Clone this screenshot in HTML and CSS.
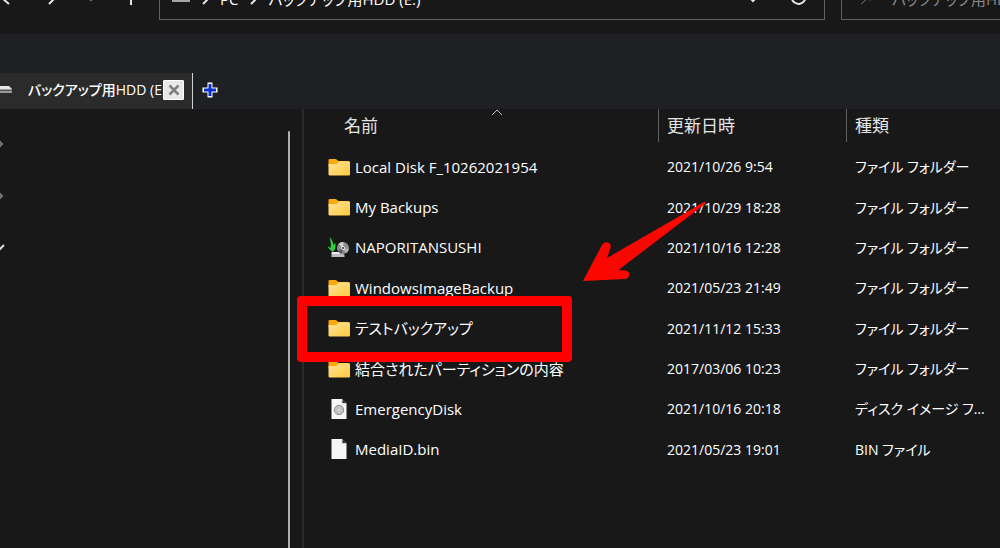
FILE: index.html
```
<!DOCTYPE html>
<html lang="ja">
<head>
  <meta charset="UTF-8">
  <meta name="viewport" content="width=device-width, initial-scale=1.0">
  <title>バックアップ用HDD (E:)</title>
  <link rel="stylesheet" href="styles.css">
</head>
<body>
  <!-- Shared icons -->
  <svg class="sprite" width="0" height="0" aria-hidden="true">
    <defs>
      <linearGradient id="folder-fill" x1="0" y1="0" x2="1" y2="1">
        <stop offset="0" stop-color="#ffe49a"/>
        <stop offset="1" stop-color="#ffc83d"/>
      </linearGradient>
      <linearGradient id="arrow-fill" x1="0" y1="1" x2="1" y2="0">
        <stop offset="0" stop-color="#ff0800"/>
        <stop offset="0.3" stop-color="#f50800"/>
        <stop offset="1" stop-color="#ff0800"/>
      </linearGradient>
    </defs>
    <symbol id="folder" viewBox="0 0 22 20">
      <path d="M1 3.5C1 2.4 1.6 2 2.5 2h5.2c.8 0 1.2.2 1.7.8L11 4h9c1 0 1.500.500 1.500 1.500V9H1z" fill="#f9a80c"/>
      <path d="M1 8c0-.8.4-1.100 1.100-1.100h6c.8 0 1.300-.3 1.800-.9l1-1.200c.3-.4.600-.5 1.100-.5h9c1 0 1.500.5 1.500 1.400V17c0 1-.5 1.600-1.500 1.600h-17.500C1.500 18.600 1 18 1 17z" fill="url(#folder-fill)"/>
    </symbol>
    <symbol id="page" viewBox="0 0 22 20">
      <path d="M4 0h10.500L19 4.500V20H4z" fill="#f7f7f7"/>
      <path d="M14.500 0v4.500H19z" fill="#2a2a2a"/>
      <path d="M14.500 .5v4H18.500" fill="none" stroke="#d8d8d8"/>
    </symbol>
  </svg>

  <header class="toolbar">
    <nav class="nav-buttons">
      <button aria-label="戻る"><svg width="16" height="16" viewBox="0 0 16 16"><path d="M9 0 2 6l7 6"/></svg></button>
      <button aria-label="進む"><svg width="16" height="16" viewBox="0 0 16 16"><path d="m6 0 6 6-6 6"/></svg></button>
      <button class="dim" aria-label="履歴"><svg width="10" height="16" viewBox="0 0 10 16"><path d="m2 5 3 3 3-3"/></svg></button>
      <button aria-label="上へ"><svg width="16" height="16" viewBox="0 0 16 16"><path d="M8 13V1M3 6l5-5 5 5"/></svg></button>
    </nav>
    <div class="address">
      <svg class="drive" width="18" height="10" viewBox="0 0 18 10"><path d="M3 2h12l3 4H0z" fill="#d5d5d5"/><path d="M0 5h18v3H0z" fill="#a5a5a5"/></svg>
      <svg width="8" height="12" viewBox="0 0 8 12"><path d="m2 1 5 5-5 5"/></svg>
      <a class="crumb" href="#">PC</a>
      <svg width="8" height="12" viewBox="0 0 8 12"><path d="m2 1 5 5-5 5"/></svg>
      <a class="crumb" href="#">バックアップ用HDD (E:)</a>
      <button class="history" aria-label="以前の場所"><svg width="12" height="10" viewBox="0 0 12 10"><path d="m1 2 5 5 5-5"/></svg></button>
      <button aria-label="最新の情報に更新"><svg width="18" height="18" viewBox="0 0 18 18"><path d="M15 4a7 7 0 1 1-5-4M15 0v4h-5"/></svg></button>
    </div>
    <label class="search">
      <svg width="16" height="16" viewBox="0 0 16 16"><circle cx="10" cy="5" r="4"/><path d="m7 8-6 5"/></svg>
      <input type="search" placeholder="バックアップ用HDD (E:)の検索" aria-label="検索">
    </label>
  </header>

  <div class="tab-strip">
    <div class="tab">
      <svg class="tab-drive" width="12" height="8" viewBox="0 0 12 8"><path d="M0 0h9l3 3H0z" fill="#e8e8e8"/><path d="M0 3h12v4H0z" fill="#999"/><path d="M0 4.500h12" stroke="#555"/></svg>
      <span class="tab-title">バックアップ用HDD (E:)</span>
      <button class="tab-close" aria-label="タブを閉じる"><svg width="12" height="12" viewBox="0 0 12 12"><path d="m1.500 1.500 9 9m0-9-9 9" stroke="#808080" stroke-width="2.500"/></svg></button>
    </div>
    <button class="tab-add" aria-label="新しいタブ"><svg width="16" height="16" viewBox="0 0 16 16"><path d="M5.500 .5h5v5h5v5h-5v5h-5v-5h-5v-5h5z" fill="#fff"/><path d="M8 2v12M2 8h12" stroke="#0a2fd0" stroke-width="3"/></svg></button>
  </div>

  <main class="explorer">
    <aside class="sidebar">
      <div class="tree">
        <button aria-label="展開"><svg width="6" height="12" viewBox="0 0 6 12"><path d="m-2 2 4 4-4 4" stroke="#777" stroke-width="2"/></svg></button>
        <button aria-label="展開"><svg width="6" height="12" viewBox="0 0 6 12"><path d="m-2 2 4 4-4 4" stroke="#777" stroke-width="2"/></svg></button>
        <button aria-label="折りたたむ"><svg width="6" height="12" viewBox="0 0 6 12"><path d="m-5 4 4 4 5-5" stroke="#ddd" stroke-width="2"/></svg></button>
      </div>
      <div class="scrollbar"></div>
    </aside>

    <section class="files">
      <table>
        <colgroup><col class="col-name"><col class="col-date"><col></colgroup>
        <thead>
          <tr>
            <th><button>名前</button><svg class="sort" width="12" height="7" viewBox="0 0 12 7"><path d="m1 6 5-5 5 5"/></svg></th>
            <th><button>更新日時</button></th>
            <th><button>種類</button></th>
          </tr>
        </thead>
        <tbody>
          <tr>
            <td><a href="#"><svg class="icon"><use href="#folder"/></svg>Local Disk F_10262021954</a></td>
            <td>2021/10/26 9:54</td>
            <td>ファイル フォルダー</td>
          </tr>
          <tr>
            <td><a href="#"><svg class="icon"><use href="#folder"/></svg>My Backups</a></td>
            <td>2021/10/29 18:28</td>
            <td>ファイル フォルダー</td>
          </tr>
          <tr>
            <td><a href="#"><svg class="icon" viewBox="0 0 22 20">
              <path d="M4 15h10l3 3v2H4z" fill="#bbb"/><path d="M5 15h8l2 2H4z" fill="#eee"/>
              <circle cx="15.500" cy="11" r="6" fill="#8d8d92"/><path d="M15.500 11 11 7a6 6 0 0 1 5-2z" fill="#d5cdd0"/><path d="m15.500 11 3 5.200a6 6 0 0 0 3-4.200z" fill="#bbaeb0"/><path d="m15.500 11-5 3a6 6 0 0 0 4 3z" fill="#55596b"/>
              <circle cx="15.500" cy="11" r="2" fill="#f1e5e0"/><circle cx="15.500" cy="11" r="1" fill="#333"/>
              <path d="M2 0c3 3 4 6 3.500 8L8 6c0 4 0 6-2.500 9C4 14 1 12 0 9l3 2C4 7 3 4 2 0z" fill="#2fd03c"/>
            </svg>NAPORITANSUSHI</a></td>
            <td>2021/10/16 12:28</td>
            <td>ファイル フォルダー</td>
          </tr>
          <tr>
            <td><a href="#"><svg class="icon"><use href="#folder"/></svg>WindowsImageBackup</a></td>
            <td>2021/05/23 21:49</td>
            <td>ファイル フォルダー</td>
          </tr>
          <tr>
            <td><a href="#"><svg class="icon"><use href="#folder"/></svg>テストバックアップ</a></td>
            <td>2021/11/12 15:33</td>
            <td>ファイル フォルダー</td>
          </tr>
          <tr>
            <td><a href="#"><svg class="icon"><use href="#folder"/></svg>結合されたパーティションの内容</a></td>
            <td>2017/03/06 10:23</td>
            <td>ファイル フォルダー</td>
          </tr>
          <tr>
            <td><a href="#"><svg class="icon" viewBox="0 0 22 20"><use href="#page" width="22" height="20"/><circle cx="11.500" cy="11" r="4.700" fill="#c3c3c3" stroke="#8d8d8d"/><circle cx="11.500" cy="11" r="1" fill="#e5e5e5"/></svg>EmergencyDisk</a></td>
            <td>2021/10/16 20:18</td>
            <td>ディスク イメージ ファイル</td>
          </tr>
          <tr>
            <td><a href="#"><svg class="icon"><use href="#page"/></svg>MediaID.bin</a></td>
            <td>2021/05/23 19:01</td>
            <td>BIN ファイル</td>
          </tr>
        </tbody>
      </table>

      <!-- Annotation -->
      <div class="highlight"></div>
      <svg class="arrow" width="124" height="84" viewBox="0 0 124 84">
        <path d="M1 81 20 45C22.500 40 30.500 42 28.500 48L25 58 122 2C124 2 124 3 123 4L36.500 70 43 70.500C49 71 48.500 78.500 43 79z" fill="url(#arrow-fill)"/>
      </svg>
    </section>
  </main>
</body>
</html>
```
FILE: styles.css
```
* {
  box-sizing: border-box;
}

body {
  display: flex;
  flex-direction: column;
  min-height: 100vh;
  margin: 0;
  overflow: hidden;
  background: #181818;
  color: #fff;
  font-family: "Open Sans", "Noto Sans CJK JP", sans-serif;
  font-size: 15px;
  line-height: 20px;
  font-feature-settings: "palt";
}

button {
  display: flex;
  align-items: center;
  margin: 0;
  padding: 0;
  border: 0;
  background: none;
  color: inherit;
  font: inherit;
}

a {
  color: inherit;
  text-decoration: none;
}

svg {
  flex: none;
  fill: none;
  stroke: none;
}

.sprite {
  position: absolute;
}

/* Toolbar, partly scrolled off the top */
.toolbar {
  display: flex;
  gap: 16px;
  height: 54px;
  margin-top: -20px;
  padding-bottom: 14px;
}

.toolbar svg {
  stroke: #e5e5e5;
  stroke-width: 2;
}

.toolbar .drive {
  stroke: none;
}

.nav-buttons {
  display: flex;
  align-items: center;
  justify-content: space-between;
  width: 143px;
  padding-right: 4px;
}

.nav-buttons .dim {
  opacity: 0.5;
}

.address,
.search {
  display: flex;
  align-items: center;
  padding-bottom: 3px;
  border: 1px solid #606060;
}

.address {
  flex: 1;
  gap: 11px;
  padding-right: 16px;
  padding-left: 12px;
}

.history {
  margin-right: 20px;
  margin-left: auto;
}

.search {
  width: 179px;
  margin-right: -20px;
  padding-left: 18px;
  gap: 16px;
}

.search svg {
  stroke: #777;
  stroke-width: 1;
}

.search input {
  flex: 1;
  min-width: 0;
  padding: 0;
  border: 0;
  outline: 0;
  background: none;
  font: inherit;
}

.search input::placeholder {
  color: #8a8a8a;
}

/* Tabs */
.tab-strip {
  display: flex;
  align-items: flex-end;
  height: 75px;
  background: #1f2024;
}

.tab {
  display: flex;
  align-items: center;
  width: 193px;
  height: 36px;
  padding-right: 8px;
  padding-bottom: 3px;
  border-right: 1px solid #d0d0d0;
  background: #2b2b2b;
}

.tab-title {
  flex: 1;
  margin-left: 16px;
  overflow: hidden;
  font-size: 14px;
  font-weight: 500;
  white-space: nowrap;
}

.tab-close {
  justify-content: center;
  width: 21px;
  height: 20px;
  border: 1px solid #fff;
  border-radius: 1px;
  background: #e8e8e8;
}

.tab-add {
  height: 36px;
  margin-left: 9px;
  padding-bottom: 2px;
}

/* Panes */
.explorer {
  display: flex;
  flex: 1;
}

.sidebar {
  display: flex;
  justify-content: space-between;
  width: 304px;
  padding-right: 12px;
  border-right: 2px solid #2b2b2b;
}

.tree {
  display: flex;
  flex-direction: column;
  gap: 40px;
  padding-top: 29px;
}

.scrollbar {
  width: 2px;
  margin-top: 22px;
  border-radius: 2px 2px 0 0;
  background: #b0b0b0;
}

.files {
  position: relative;
  flex: 1;
}

table {
  width: 100%;
  height: 361px;
  border-collapse: collapse;
  table-layout: fixed;
}

.col-name {
  width: 354px;
}

.col-date {
  width: 188px;
}

thead tr {
  height: 38px;
}

th {
  position: relative;
  padding: 0;
  font-weight: 400;
  vertical-align: top;
}

th button {
  width: 100%;
  height: 33px;
  padding-left: 8px;
  border-left: 1px solid #606060;
  color: #e5e5e5;
  font-size: 17px;
}

th:first-child button {
  padding-left: 40px;
  border-left: 0;
}

.sort {
  position: absolute;
  top: 0;
  left: 187px;
  stroke: #c0c0c0;
}

td {
  padding: 0 10px 0 9px;
  overflow: hidden;
  font-size: 14px;
  text-overflow: ellipsis;
  white-space: nowrap;
}

td:first-child {
  padding-bottom: 1px;
  padding-left: 23px;
  font-size: 15px;
}

td a {
  display: flex;
  align-items: center;
  gap: 5px;
}

.icon {
  width: 23px;
  height: 20px;
}

/* Marks over the list */
.highlight {
  position: absolute;
  top: 187px;
  left: -7px;
  width: 275px;
  height: 66px;
  border: 10px solid #f00;
  border-radius: 4px;
}

.arrow {
  position: absolute;
  top: 91px;
  left: 278px;
}
```
